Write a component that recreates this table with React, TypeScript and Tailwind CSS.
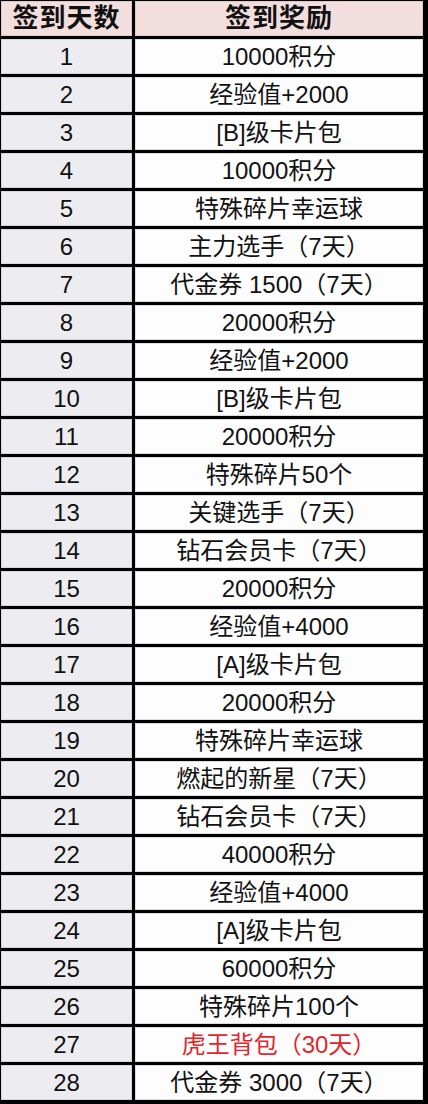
import React from "react";

const rows: { d: string; r: string; red?: boolean }[] = [
  { d: "1", r: "10000积分" },
  { d: "2", r: "经验值+2000" },
  { d: "3", r: "[B]级卡片包" },
  { d: "4", r: "10000积分" },
  { d: "5", r: "特殊碎片幸运球" },
  { d: "6", r: "主力选手（7天）" },
  { d: "7", r: "代金券 1500（7天）" },
  { d: "8", r: "20000积分" },
  { d: "9", r: "经验值+2000" },
  { d: "10", r: "[B]级卡片包" },
  { d: "11", r: "20000积分" },
  { d: "12", r: "特殊碎片50个" },
  { d: "13", r: "关键选手（7天）" },
  { d: "14", r: "钻石会员卡（7天）" },
  { d: "15", r: "20000积分" },
  { d: "16", r: "经验值+4000" },
  { d: "17", r: "[A]级卡片包" },
  { d: "18", r: "20000积分" },
  { d: "19", r: "特殊碎片幸运球" },
  { d: "20", r: "燃起的新星（7天）" },
  { d: "21", r: "钻石会员卡（7天）" },
  { d: "22", r: "40000积分" },
  { d: "23", r: "经验值+4000" },
  { d: "24", r: "[A]级卡片包" },
  { d: "25", r: "60000积分" },
  { d: "26", r: "特殊碎片100个" },
  { d: "27", r: "虎王背包（30天）", red: true },
  { d: "28", r: "代金券 3000（7天）" },
];

const font = { fontFamily: '"Liberation Sans", "Noto Sans CJK SC", sans-serif' };

export default function App() {
  return (
    <div
      className="w-[428px] h-[1104px] bg-black pt-[1px] pl-[1px] pr-[5px] pb-[4px] grid grid-cols-[131px_288px] auto-rows-[35px] gap-[3px] overflow-hidden"
      style={font}
    >
      <div className="bg-[#f2dedd] border border-[#e0c8c8] flex items-center justify-center text-[26px] font-bold tracking-[1px] text-[#111]">
        签到天数
      </div>
      <div className="bg-[#f2dedd] border border-[#e0c8c8] flex items-center justify-center text-[26px] font-bold tracking-[1px] text-[#111]">
        签到奖励
      </div>
      {rows.map((row) => (
        <React.Fragment key={row.d}>
          <div className="bg-[#ededf1] border border-[#d6d6da] flex items-center justify-center text-[24px] text-[#111]">
            {row.d}
          </div>
          <div
            className={
              row.red
                ? "bg-[#fdfdfe] border border-[#dcdce0] flex items-center justify-center text-[24px] text-[#e0262a]"
                : "bg-[#fdfdfe] border border-[#dcdce0] flex items-center justify-center text-[24px] text-[#111]"
            }
          >
            {row.r}
          </div>
        </React.Fragment>
      ))}
    </div>
  );
}
